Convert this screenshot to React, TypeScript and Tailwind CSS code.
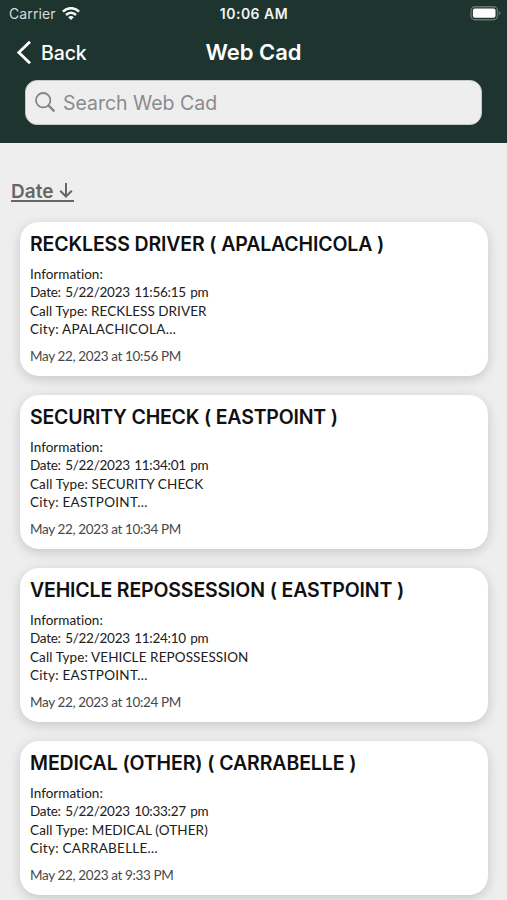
type Call = {
  title: string;
  date: string;
  type: string;
  city: string;
  posted: string;
  titleTracking: string;
  typeTracking: string;
};

const calls: Call[] = [
  { title: "RECKLESS DRIVER ( APALACHICOLA )", date: "5/22/2023 11:56:15 pm", type: "RECKLESS DRIVER", city: "APALACHICOLA…", posted: "May 22, 2023 at 10:56 PM", titleTracking: "tracking-[-0.14px]", typeTracking: "tracking-[0.05px]" },
  { title: "SECURITY CHECK ( EASTPOINT )", date: "5/22/2023 11:34:01 pm", type: "SECURITY CHECK", city: "EASTPOINT…", posted: "May 22, 2023 at 10:34 PM", titleTracking: "tracking-[-0.2px]", typeTracking: "tracking-[0.1px]" },
  { title: "VEHICLE REPOSSESSION ( EASTPOINT )", date: "5/22/2023 11:24:10 pm", type: "VEHICLE REPOSSESSION", city: "EASTPOINT…", posted: "May 22, 2023 at 10:24 PM", titleTracking: "tracking-[-0.15px]", typeTracking: "tracking-[0.1px]" },
  { title: "MEDICAL (OTHER) ( CARRABELLE )", date: "5/22/2023 10:33:27 pm", type: "MEDICAL (OTHER)", city: "CARRABELLE…", posted: "May 22, 2023 at 9:33 PM", titleTracking: "tracking-[-0.11px]", typeTracking: "tracking-[0.12px]" },
];

function WifiIcon() {
  return (
    <svg width="18" height="14" viewBox="0 0 18 14" fill="none" stroke="#f4f7f5" strokeWidth="2.5">
      <path d="M0.9 4.6C5.5 0 12.5 0 17.1 4.6" />
      <path d="M4 8C6.9 5.1 11.1 5.1 14 8" />
      <path d="M9 13L6.2 10.2C7.8 8.7 10.2 8.7 11.8 10.2Z" fill="#f4f7f5" stroke="none" />
    </svg>
  );
}

function BatteryIcon() {
  return (
    <svg width="32" height="16" viewBox="0 0 32 16">
      <rect x="1" y="0.7" width="26.5" height="13" rx="4" fill="none" stroke="#66736f" strokeWidth="1.4" />
      <rect x="2.9" y="2.6" width="22.6" height="9.2" rx="2" fill="#fff" />
      <path d="M29.2 5.1C31 6 31 8.4 29.2 9.3Z" fill="#75827e" />
    </svg>
  );
}

function CallCard({ call }: { call: Call }) {
  return (
    <article className="h-[154px] rounded-[19px] bg-white pl-[10px] pt-[10px] whitespace-nowrap shadow-[0_3px_12px_rgba(0,0,0,0.17)]">
      <h2 className={"w-fit text-[19.5px] leading-6 font-semibold text-[#101010] " + call.titleTracking}>{call.title}</h2>
      <div className="mt-[9px] font-['Lato',sans-serif] text-[13.5px] leading-[18.3px] text-[#202020] [font-variant-ligatures:none]">
        <p className="w-fit tracking-[0.02px]">Information:</p>
        <p className="w-fit tracking-[-0.26px] [word-spacing:1.2px]">Date: {call.date}</p>
        <p className={"w-fit " + call.typeTracking}>Call Type: {call.type}</p>
        <p className="w-fit tracking-[0.27px]">City: {call.city}</p>
      </div>
      <p className="mt-[9px] w-fit font-['Lato',sans-serif] text-[13.5px] leading-[18px] tracking-[-0.36px] text-[#484848]">{call.posted}</p>
    </article>
  );
}

export default function App() {
  return (
    <div className="h-[900px] w-full overflow-hidden bg-[#eeeeee] font-['Inter',sans-serif]">
      <header className="h-[142.5px] bg-[#1e342e]">
        <div className="grid h-[27px] grid-cols-3 items-center pl-[9px] pr-[5px]">
          <div className="flex items-center gap-[6px]">
            <span className="text-[14px] tracking-[0.1px] text-[#d5dcd9]">Carrier</span>
            <WifiIcon />
          </div>
          <span className="-ml-[3px] text-center text-[14px] font-semibold tracking-[0.5px] text-[#f0f5f2]">10:06 AM</span>
          <div className="flex justify-end"><BatteryIcon /></div>
        </div>
        <div className="grid h-[49px] grid-cols-3 items-center px-[16px] text-white">
          <button className="flex items-center gap-[9px] pt-[2px]">
            <svg width="16" height="26" viewBox="0 0 16 26" fill="none" stroke="currentColor" strokeWidth="2.8">
              <path d="M14 1.8L2.8 12.5L14 23.2" />
            </svg>
            <span className="pt-px text-[19.5px] leading-6 font-medium tracking-[-0.1px]">Back</span>
          </button>
          <h1 className="pt-[2px] text-center text-[22px] font-semibold">Web Cad</h1>
        </div>
        <div className="mx-[25px] mt-[4px] flex h-[45px] items-center gap-[8px] rounded-[12px] border border-[#c3cac7] bg-[#eeeeee] pl-[9px]">
          <svg width="20" height="21" viewBox="0 0 20 21" fill="none" stroke="#858585" strokeWidth="1.8">
            <circle cx="8.2" cy="8.2" r="7.2" />
            <path d="M13.4 13.4L19.4 19.4" strokeWidth="2.3" />
          </svg>
          <span className="pt-[3px] text-[19.5px] tracking-[-0.02px] text-[#8b8b8b]">Search Web Cad</span>
        </div>
      </header>
      <main className="pt-[36.5px]">
        <button className="ml-[11px] flex h-[23px] w-[63px] items-center gap-[6px] border-b-2 border-[#666666] text-[#666666]">
          <span className="pt-[5px] text-[19px] leading-6 font-semibold">Date</span>
          <svg width="14" height="16" viewBox="0 0 14 16" fill="none" stroke="currentColor" strokeWidth="2">
            <path d="M7 1V14.5M1.2 8.7L7 14.5L12.8 8.7" />
          </svg>
        </button>
        <div className="mt-[20px] flex flex-col gap-[19px] pl-[20px] pr-[19px]">
          {calls.map((call) => <CallCard key={call.title} call={call} />)}
        </div>
      </main>
    </div>
  );
}
